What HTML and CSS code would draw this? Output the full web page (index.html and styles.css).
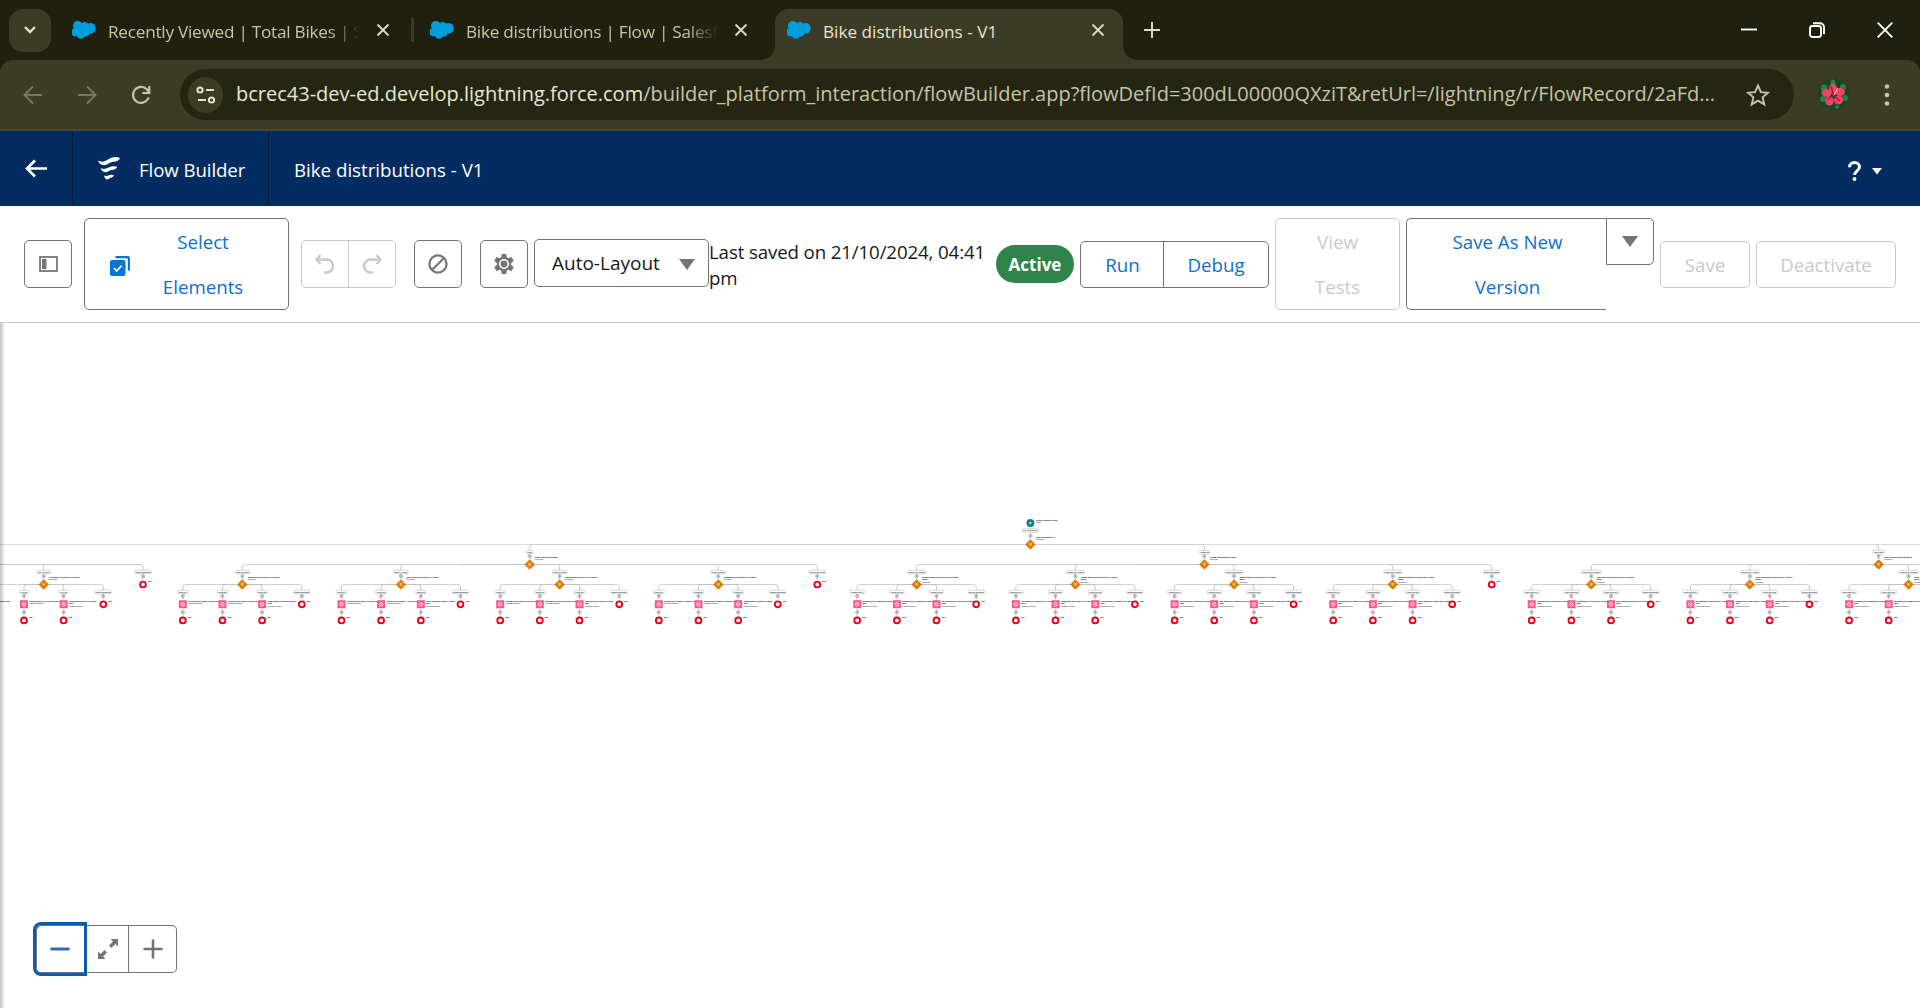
FILE: index.html
```html
<!DOCTYPE html>
<html lang="en">
<head>
<meta charset="utf-8">
<title>Bike distributions - V1</title>
<link rel="stylesheet" href="styles.css">
</head>
<body>
<svg class="defs" width="0" height="0">
  <symbol id="cloud" viewBox="0 0 24 18"><path d="M10 2.200A4.200 4.200 0 0 1 16.200 2.600A5 5 0 0 1 23.600 7.600A5 5 0 0 1 17.600 12.600A3.800 3.800 0 0 1 12.800 15.400A4.400 4.400 0 0 1 4.800 15A3.900 3.900 0 0 1 1.700 7.200A4.500 4.500 0 0 1 10 2.200Z"/></symbol>
  <symbol id="x" viewBox="0 0 14 14"><path d="M1.500 1.500l11 11M12.500 1.500l-11 11"/></symbol>
</svg>
<header class="tabs">
  <button class="tab-search"><svg width="14" height="10" viewBox="0 0 14 10"><path d="M2 2l5 5 5-5"/></svg></button>
  <div class="tab first"><svg class="cloud"><use href="#cloud"/></svg><span class="title faded">Recently Viewed | Total Bikes | Salesforce</span><svg class="close"><use href="#x"/></svg></div>
  <i class="sep"></i>
  <div class="tab second"><svg class="cloud"><use href="#cloud"/></svg><span class="title faded">Bike distributions | Flow | Salesforce</span><svg class="close"><use href="#x"/></svg></div>
  <div class="tab active"><svg class="cloud"><use href="#cloud"/></svg><span class="title">Bike distributions - V1</span><svg class="close"><use href="#x"/></svg></div>
  <svg class="newtab" width="18" height="18" viewBox="0 0 18 18"><path d="M9 1v16M1 9h16"/></svg>
  <div class="window">
    <svg width="16" height="16" viewBox="0 0 16 16"><path d="M0 7.500h16"/></svg>
    <svg width="16" height="16" viewBox="0 0 16 16"><rect x="1" y="4" width="11" height="11" rx="2.500"/><path d="M4 1.200h7a4 4 0 0 1 4 4v7"/></svg>
    <svg width="16" height="16" viewBox="0 0 16 16"><path d="M.7.7l14.600 14.600M15.300.7L.7 15.300"/></svg>
  </div>
</header>
<nav class="browser">
  <svg class="nav dim" width="20" height="20" viewBox="0 0 20 20"><path d="M19 10H2M10 1.500L1.500 10l8.500 8.500"/></svg>
  <svg class="nav dim fwd" width="20" height="20" viewBox="0 0 20 20"><path d="M1 10h17M10 1.500l8.500 8.500-8.500 8.500"/></svg>
  <svg class="nav reload" width="20" height="20" viewBox="0 0 20 20"><path d="M17.600 12.500A8 8 0 1 1 16 4.500L18 7M18.300 1v7h-7"/></svg>
  <div class="omnibox">
    <span class="site"><svg width="20" height="18" viewBox="0 0 20 18"><circle cx="4" cy="4" r="2.600"/><path d="M10 4h8M2 14h8"/><circle cx="15.500" cy="14" r="2.600"/></svg></span>
    <span class="url"><b>bcrec43-dev-ed.develop.lightning.force.com</b>/builder_platform_interaction/flowBuilder.app?flowDefId=300dL00000QXziT&amp;retUrl=/lightning/r/FlowRecord/2aFd...</span>
    <svg class="star" width="24" height="24" viewBox="0 0 24 24"><path d="M12 2.500l2.900 6.600 7.100.6-5.400 4.700 1.700 7L12 17.600 5.700 21.400l1.700-7L2 9.700l7.100-.6z"/></svg>
  </div>
  <svg class="avatar" width="31" height="31" viewBox="0 0 31 31">
    <circle cx="15.500" cy="15.500" r="15.500" fill="#0f4a1d"/>
    <g fill="#2f7d45"><circle cx="6" cy="9" r="3.500"/><circle cx="25" cy="8" r="3"/><circle cx="27" cy="19" r="3"/><circle cx="5" cy="20" r="3"/><circle cx="15" cy="3" r="2.500"/><circle cx="19" cy="28" r="2"/></g>
    <g fill="#f2416b"><ellipse cx="15" cy="9.500" rx="4" ry="5"/><ellipse cx="22" cy="13" rx="5" ry="4"/><ellipse cx="20.500" cy="21" rx="4.500" ry="4.500"/><ellipse cx="11.500" cy="22" rx="4.300" ry="4.500"/><ellipse cx="8.500" cy="14" rx="5" ry="4"/></g>
    <path d="M15.500 16L13 7M15.500 16l6 6M15.500 16l-6 5" stroke="#a81c40" stroke-width="1.500"/><path d="M16 16l4-7" stroke="#ffc9a8" stroke-width="1.200"/>
  </svg>
  <svg class="dots" width="6" height="24" viewBox="0 0 6 24"><circle cx="3" cy="3.500" r="2.300"/><circle cx="3" cy="12" r="2.300"/><circle cx="3" cy="20.500" r="2.300"/></svg>
</nav>
<div class="builder-head">
  <a class="back"><svg width="23" height="19" viewBox="0 0 23 19"><path d="M22 9.500H2.500M10 1.500l-8 8 8 8"/></svg></a>
  <div class="brand"><svg width="22" height="23" viewBox="0 0 22 23"><path d="M0 3.600C3 5.300 6 5 9.500 2.800C13 .4 17-.9 22 .9C21.300 3.300 19 4.400 15.500 4.800C11 5.400 9 8.500 5 8.100C2.500 7.800.8 6 0 3.600zM2.800 11C5.500 12.600 7.500 12 10 10.800C13 9.300 15.800 8.500 19.200 9.800C18.500 12 16.500 12.800 13.800 13.100C11 13.500 9.500 15.500 7 15.300C4.500 15 3.300 13.200 2.800 11zM6 18.600C8 19.500 9.500 18.800 11 18.200C12.800 17.500 14.300 17.400 16 18.200C15.500 19.900 14 20.500 12.500 20.800C11.200 21.200 10.500 22.500 9 22.500C7.500 22.300 6.400 20.600 6 18.600z"/></svg><span>Flow Builder</span></div>
  <div class="name"><span>Bike distributions - V1</span></div>
  <div class="help"><svg width="13" height="20" viewBox="0 0 13 20"><path class="q" d="M1.500 6.200C1.500 3.400 3.700 1.500 6.500 1.500s5 1.900 5 4.500c0 3.500-5 4.300-5 8"/><circle cx="6.500" cy="18" r="1.900"/></svg><svg width="10" height="7" viewBox="0 0 10 7"><path d="M0 0h10L5 6.500z"/></svg></div>
</div>
<div class="toolbar">
  <button class="icon"><svg width="20" height="16" viewBox="0 0 20 16"><rect x="2" y="1" width="17" height="14" fill="none" stroke="#747474" stroke-width="1.800"/><path d="M4 3h4.500v10H4z" fill="#747474"/></svg></button>
  <button class="select-el"><svg width="20" height="20" viewBox="0 0 20 20"><path d="M5.500 0H18a2 2 0 0 1 2 2v12.500h-2.200V3.500a1.300 1.300 0 0 0-1.300-1.300H5.500z"/><rect x="0" y="4" width="15.500" height="16" rx="2"/><path d="M4 12l2.700 3 5-5.500" fill="none" stroke="#fff" stroke-width="1.800"/></svg><span>Select<br>Elements</span></button>
  <div class="group history"><button><svg width="20" height="20" viewBox="0 0 20 20"><path d="M5.500 1L1.500 5.500l4 4.500M2 5.500h9.500a6.500 6.500 0 0 1 0 13H9"/></svg></button><button><svg width="20" height="20" viewBox="0 0 20 20"><path d="M14.500 1l4 4.500-4 4.500M18 5.500H8.500a6.500 6.500 0 0 0 0 13H11"/></svg></button></div>
  <button class="icon ban"><svg width="20" height="20" viewBox="0 0 20 20" fill="none" stroke="#747474" stroke-width="2.200"><circle cx="10" cy="10" r="8.600"/><path d="M4.500 15.500l11-11"/></svg></button>
  <button class="icon gear"><svg width="20" height="20" viewBox="0 0 20 20"><g fill="#747474"><circle cx="10" cy="10" r="7.200"/><path d="M7.800 0h4.400l.8 4H7zM7.800 20h4.400l.8-4H7z"/><path transform="rotate(60 10 10)" d="M7.800 0h4.400l.8 4H7zM7.800 20h4.400l.8-4H7z"/><path transform="rotate(120 10 10)" d="M7.800 0h4.400l.8 4H7zM7.800 20h4.400l.8-4H7z"/></g><circle cx="10" cy="10" r="4.200" fill="none" stroke="#fff" stroke-width="1.600"/></svg></button>
  <div class="picker"><span>Auto-Layout</span><svg width="16" height="11" viewBox="0 0 16 11"><path d="M0 0h16L8 11z"/></svg></div>
  <div class="saved">Last saved on 21/10/2024, 04:41<br>pm</div>
  <span class="badge">Active</span>
  <div class="group run"><button>Run</button><button>Debug</button></div>
  <button class="tall tests"><span>View</span><span>Tests</span></button>
  <div class="saveas"><button class="tall"><span>Save As New</span><span>Version</span></button><button class="more"><svg width="16" height="11" viewBox="0 0 16 11"><path d="M0 0h16L8 11z"/></svg></button></div>
  <button class="off save">Save</button>
  <button class="off deact">Deactivate</button>
</div>
<main class="canvas">
  <svg id="flow" width="1920" height="685" viewBox="0 323 1920 685"></svg>
  <div class="zoom">
    <button class="focus"><svg width="20" height="4" viewBox="0 0 20 4"><path d="M1.500 2h17" stroke="#3a68a8" stroke-width="2.800" stroke-linecap="round"/></svg></button>
    <button><svg width="20" height="20" viewBox="0 0 20 20"><path d="M12.500 0H20v7.500l-2.600-2.600-4 4-2.400-2.400 4-4zM7.500 20H0v-7.500l2.600 2.600 4-4L9 13.500l-4 4z" fill="#747474"/></svg></button>
    <button><svg width="20" height="20" viewBox="0 0 20 20"><path d="M10 1.500v17M1.500 10h17" stroke="#747474" stroke-width="2.600" stroke-linecap="round"/></svg></button>
  </div>
</main>
<script src="flow.js"></script>
</body>
</html>
```
FILE: styles.css
```css
* { box-sizing: border-box; }
body { margin: 0; width: 1920px; height: 1008px; overflow: hidden; display: flex; flex-direction: column; font-family: "Open Sans", "Noto Sans", sans-serif; font-size: 18.7px; background: #fff; color: #181818; }
button { font: inherit; color: inherit; margin: 0; padding: 0; border: 0; background: none; display: flex; align-items: center; justify-content: center; flex: none; }
svg { display: block; flex: none; }
.defs { position: absolute; }

.tabs { height: 60px; flex: none; background: #1f200e; display: flex; align-items: center; padding-left: 9px; color: #c8c6a2; }
.tab-search { width: 42px; height: 43px; border-radius: 14px; background: #3c3b26; }
.tab-search path { fill: none; stroke: #e5e3c8; stroke-width: 2.400; }
.tab { display: flex; align-items: center; height: 51px; align-self: flex-end; padding-bottom: 9px; }
.first { margin-left: 21px; width: 339px; }
.second { margin-left: 15px; width: 345px; padding-left: 1px; }
.cloud { width: 24px; height: 18px; fill: #009ddc; }
.title { margin-left: 12px; width: 255px; white-space: nowrap; overflow: hidden; font-size: 17.200px; position: relative; top: 1px; }
.faded { letter-spacing: -.25px; -webkit-mask-image: linear-gradient(90deg, #000 220px, transparent 252px); }
.close { width: 14px; height: 14px; margin-left: 13px; }
.close path, #x path { fill: none; stroke: #dddbb8; stroke-width: 1.900; }
.sep { width: 3px; height: 24px; background: #3c3b26; border-radius: 1px; }
.active { position: relative; width: 348px; margin-left: 1px; background: #3c3b26; border-radius: 14px 14px 0 0; padding-left: 12px; color: #e7e5d3; }
.active::before, .active::after { content: ""; position: absolute; bottom: 0; width: 14px; height: 14px; }
.active::before { left: -14px; background: radial-gradient(circle at 0 0, transparent 13.500px, #3c3b26 14px); }
.active::after { right: -14px; background: radial-gradient(circle at 100% 0, transparent 13.500px, #3c3b26 14px); }
.newtab { margin-left: 20px; stroke: #dddbb8; stroke-width: 2; }
.window { margin-left: auto; display: flex; gap: 52px; padding-right: 27px; fill: none; stroke: #fff; stroke-width: 1.900; }

.browser { height: 71px; flex: none; background: #3c3b26; border-bottom: 2px solid #48463a; display: flex; align-items: center; padding: 0 30px 0 23px; position: relative; }
.browser::before, .browser::after { content: ""; position: absolute; top: 0; width: 12px; height: 12px; }
.browser::before { left: 0; background: radial-gradient(circle at 100% 100%, transparent 11.500px, #1f200e 12px); }
.browser::after { right: 0; background: radial-gradient(circle at 0 100%, transparent 11.500px, #1f200e 12px); }
.nav { fill: none; stroke: #c9c79c; stroke-width: 2.200; }
.dim { stroke: #7b7a5f; stroke-width: 1.900; }
.fwd { margin-left: 34px; }
.reload { margin-left: 34px; }
.omnibox { margin-left: 29px; width: 1614px; height: 51px; border-radius: 26px; background: #252611; display: flex; align-items: center; padding-left: 8px; color: #c6c4ab; }
.site { width: 35px; height: 36px; border-radius: 18px; background: #3c3b26; display: flex; align-items: center; justify-content: center; fill: none; stroke: #e5e3cd; stroke-width: 2; }
.url { margin-left: 13px; white-space: nowrap; font-size: 20px; position: relative; top: -1px; }
.url b { font-weight: 400; color: #e8e6d4; }
.star { margin-left: auto; margin-right: 24px; fill: none; stroke: #c6c4ab; stroke-width: 1.900; }
.avatar { margin-left: 24px; }
.dots { margin-left: auto; fill: #c9c79c; }

.builder-head { height: 75px; flex: none; background: #032d60; color: #fff; display: flex; align-items: stretch; }
.builder-head > div, .back { display: flex; align-items: center; }
.back { width: 73px; padding-left: 25px; border-right: 1px solid #03193a; fill: none; stroke: #fff; stroke-width: 2.600; }
.brand { width: 196px; padding-left: 25px; gap: 19px; border-right: 1px solid #03193a; fill: #fff; letter-spacing: -.1px; }
.name { padding-left: 25px; }
.brand span, .name span { position: relative; top: 1px; }
.builder-head .help { margin-left: auto; padding: 5px 38px 0 0; gap: 11px; fill: #fff; }
.q { fill: none; stroke: #fff; stroke-width: 3; }

.toolbar { height: 117px; flex: none; border-bottom: 1px solid #c9c9c9; display: flex; align-items: center; padding: 0 24px; }
.icon { width: 48px; height: 48px; border: 1px solid #747474; border-radius: 5px; }
.select-el { margin-left: 12px; width: 205px; height: 92px; border: 1px solid #747474; border-radius: 5px; color: #0b6fce; line-height: 45px; fill: #0176d3; justify-content: flex-start; padding-left: 25px; }
.select-el > svg { position: relative; top: 2px; }
.select-el > span { width: 146px; text-align: center; }
.group { display: flex; flex: none; height: 48px; border: 1px solid #747474; border-radius: 5px; }
.group button + button { border-left: 1px solid #747474; }
.history { margin-left: 12px; width: 95px; border-color: #c9c9c9; fill: none; stroke: #c9c9c9; stroke-width: 2.400; }
.history button:first-child { width: 46px; }
.history button:last-child { width: 47px; }
.group.history button + button { border-color: #c9c9c9; }
.ban, .gear { margin-left: 18px; }
.picker { margin: 0 0 2px 6px; width: 175px; height: 48px; flex: none; border: 1px solid #747474; border-radius: 5px; display: flex; align-items: center; justify-content: space-between; padding: 0 13px 0 17px; fill: #747474; }
.picker span { font-size: 19px; }
.picker svg { position: relative; top: 1px; }
.saved { width: 287px; flex: none; line-height: 26px; white-space: nowrap; letter-spacing: -.13px; padding-top: 2px; }
.badge { width: 78px; height: 38px; flex: none; border-radius: 19px; background: #2e844a; color: #fff; font-weight: 700; font-size: 17px; display: flex; align-items: center; justify-content: center; }
.run { margin: 1px 0 0 6px; height: 47px; width: 189px; color: #0b6fce; }
.run button:first-child { width: 82px; padding-left: 1px; }
.run button:last-child { width: 105px; }
.tall { flex-direction: column; height: 92px; line-height: 45px; border: 1px solid #747474; border-radius: 5px; }
.tests { margin-left: 6px; width: 125px; color: #c9c9c9; border-color: #c9c9c9; }
.saveas { margin-left: 6px; display: flex; flex: none; align-items: flex-start; color: #0b6fce; }
.saveas .tall { width: 200px; padding-left: 2px; border-right: 0; border-radius: 5px 0 0 5px; }
.more { width: 48px; height: 47px; border: 1px solid #747474; border-radius: 0 5px 5px 0; fill: #747474; }
.off { height: 47px; border: 1px solid #c9c9c9; border-radius: 5px; color: #c9c9c9; margin: 1px 0 0 6px; }
.save { width: 90px; }
.deact { width: 140px; }

.canvas { flex: 1; min-height: 0; position: relative; }
.canvas::before { content: ""; position: absolute; left: 0; top: 0; bottom: 0; width: 5px; background: linear-gradient(90deg, rgba(0, 0, 0, .24), transparent); }
.zoom { position: absolute; left: 33px; bottom: 32px; display: flex; align-items: center; }
.zoom button { width: 48px; height: 48px; border: 1px solid #747474; border-left: 0; }
.zoom button:nth-child(2) { width: 42px; }
.zoom button:last-child { border-radius: 0 5px 5px 0; }
.zoom .focus { width: 54px; height: 54px; border: 3px solid #0b5cab; border-radius: 8px 0 0 8px; box-shadow: inset 1px 1px 0 #747474, inset 0 -1px 0 #747474; }
```
FILE: flow.js
```js
const COL = 39.67;
const out = [];
const add = s => out.push(s);

// connectors
const line = (x1, x2, y, c) => add(`<path d="M${x1} ${y}H${x2}" fill="none" stroke="${c || '#d0d0d0'}" stroke-width="1"/>`);
function drop(x, y, from) {
  const d = from < x ? -2.5 : 2.5;
  add(`<path d="M${x + d} ${y}Q${x} ${y} ${x} ${y + 2.5}V${y + 15}" fill="none" stroke="#bdbdbd" stroke-width=".8"/>`);
}
const text = (x, y, s, c) => add(`<text transform="translate(${x} ${y}) scale(.2)" font-size="9.5" font-weight="700" fill="${c || '#000'}">${s}</text>`);
function pill(x, y, s) {
  const w = s.length * 0.9 + 3;
  add(`<rect x="${x - w / 2}" y="${y - 1.8}" width="${w}" height="3.6" rx="1.6" fill="#fff" stroke="#999" stroke-width=".4"/>`);
  add(`<text transform="translate(${x} ${y + .7}) scale(.2)" font-size="9" font-weight="600" text-anchor="middle" fill="#111">${s}</text>`);
}
const plus = (x, y) => add(`<circle cx="${x}" cy="${y}" r="1.7" fill="#e4ecf4" stroke="#7c8ea0" stroke-width=".5"/><path d="M${x - .8} ${y}h1.6M${x} ${y - .8}v1.6" stroke="#466a90" stroke-width=".5"/>`);
function decision(x, y, l1, l2) {
  add(`<path d="M${x} ${y - 4.800}l4.800 4.800-4.800 4.800-4.800-4.800z" fill="#dd7a01" stroke="#dd7a01" stroke-width=".8" stroke-linejoin="round"/><path d="M${x - 1.8} ${y - 1.2}h3.6M${x - 1.6} ${y + .3}h3.2M${x} ${y - 1}v2.6" stroke="#fff" stroke-width=".5" opacity=".85"/>`);
  text(x + 5.4, y - 6.3, l1);
  if (l2) text(x + 5.4, y - 4.1, l2);
  text(x + 5.4, y - (l2 ? 1.4 : 4.3), 'Decision', '#555');
}
function end(x, y) {
  add(`<circle cx="${x}" cy="${y}" r="2.9" fill="#fff" stroke="#ea001e" stroke-width="1.9"/>`);
  text(x + 5, y - 2.3, 'End');
}
function assign(x, y, l1, l2) {
  add(`<rect x="${x - 4}" y="${y - 4}" width="8" height="8" rx=".6" fill="#ff538a"/><circle cx="${x}" cy="${y}" r="1.800" fill="none" stroke="#fff" stroke-width=".8"/><path d="M${x - 1.3} ${y - 1.3}l2.600 2.600" stroke="#fff" stroke-width=".6"/>`);
  text(x + 5.2, y - 2.2, l1);
  if (l2) text(x + 5.2, y - .1, l2);
  text(x + 5.2, y + (l2 ? 2.8 : .1), 'Custom Record', '#555');
}

const NUM = ['One', 'Two', 'Three'];
function branch(x, bike, hours, xs) {
  const y = 584.5;
  line(Math.max(xs[0] + 2.5, 0), Math.min(xs[xs.length - 1] - 2.5, 1920), y);
  line(Math.max(x - COL / 2, 0), x + COL / 2, y, '#c2c2c2');
  xs.forEach((cx, i) => {
    if (cx < 0 || cx > 1920) return;
    drop(cx, y, x);
    plus(cx, 596.1);
    if (i === xs.length - 1) {
      pill(cx, 592, 'Default Outcome');
      end(cx, 604.3);
      return;
    }
    pill(cx, 592, `${bike} (0${i + 1})`);
    const two = bike.length > 5 || i === 2;
    assign(cx, 604.3, `${NUM[i]} Bike(s) of ${bike} ${hours} hours${two ? '' : ' cont'}`, two && 'cont');
    add(`<path d="M${cx} 609V617" stroke="#bdbdbd" stroke-width=".7"/>`);
    plus(cx, 612.2);
    end(cx, 620.4);
  });
  pill(x, 572, `${bike} ${hours} hours`);
  plus(x, 576.2);
  decision(x, y, `${bike} Bike(s) selected for ${hours} hours`, bike.length > 5 ? 'hours' : '');
}
function group(x, bike, first, n, def) {
  line(Math.max(first + 2.5, 0), Math.min(def - 2.5, 1920), 564.5);
  for (let i = 0; i < n; i++) {
    const c = first + i * COL * 4;
    drop(c, 564.5, x);
    branch(c, bike, 10 + i, [-1.5, -.5, .5, 1.5].map(k => +(c + k * COL).toFixed(1)));
  }
  if (def < 1920) {
    drop(def, 564.5, x);
    pill(def, 572, 'Default Outcome'); plus(def, 576.2); end(def, 584.5);
  }
  drop(x, 544.5, 1030.4);
  pill(x, 552.3, bike);
  plus(x, 556.3);
  line(x - 70, Math.min(x + 28, 1920), 564.5, '#c2c2c2');
  decision(x, 564.5, `${bike} selected for hours`);
}

line(0, 1920, 544.5, '#dadada');
line(530, 1204, 544.5, '#d0d0d0');
line(0, 140.5, 564.5, '#c8c8c8');
drop(43.7, 564.5, 0);
branch(43.7, 'Ten', 10, [-16, 24, 63.6, 103.3]);
text(-16, 602.1, 'Bike(s) of Ten 10 hours cont');
drop(143, 564.5, 0);
pill(143, 572, 'Default Outcome'); plus(143, 576.2); end(143, 584.5);
group(529.7, 'Nano', 242.3, 4, 817.3);
group(1204.4, 'Honda CB', 916.7, 4, 1491.7);
group(1878.6, 'Super Bike', 1591.2, 3, 2166);

add('<path d="M1030.4 523V540" stroke="#c6c6c6" stroke-width=".7"/>');
add('<circle cx="1030.4" cy="523" r="3.900" fill="#0b827c"/><path d="M1029.600 521.500l2.200 1.500-2.200 1.500z" fill="#fff"/>');
pill(1030.4, 530.5, 'Run Immediately');
plus(1030.4, 535.7);
text(1036, 521, 'Screen: Record of Flow');
text(1036, 523.2, 'Start', '#555');
decision(1030.4, 544.5, 'Bike Distribution 12');
document.getElementById('flow').innerHTML = out.join('');
```
